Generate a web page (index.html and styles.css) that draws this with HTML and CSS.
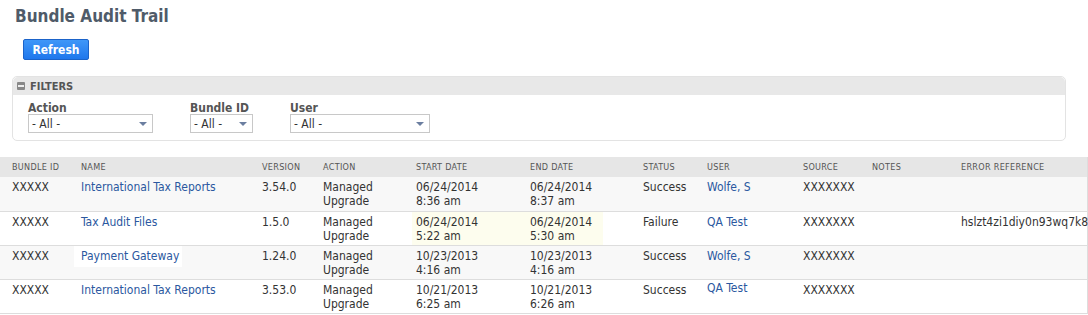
FILE: index.html
```html
<!DOCTYPE html>
<html lang="en">
<head>
  <meta charset="UTF-8" />
  <title>Bundle Audit Trail</title>
  <link rel="stylesheet" href="styles.css">
</head>
<body>

  <h1 class="page-title">Bundle Audit Trail</h1>

  <div class="toolbar">
    <button class="btn-refresh">Refresh</button>
  </div>

  <div class="filters">
    <div class="filters-head">
      <span class="collapse-icon"></span>
      FILTERS
    </div>
    <div class="filters-body">
      <div class="filter">
        <label>Action</label>
        <div class="select w-action">- All - <span class="caret"></span></div>
      </div>
      <div class="filter">
        <label>Bundle ID</label>
        <div class="select w-bundle">- All - <span class="caret"></span></div>
      </div>
      <div class="filter">
        <label>User</label>
        <div class="select w-user">- All - <span class="caret"></span></div>
      </div>
    </div>
  </div>

  <table class="audit">
    <colgroup>
      <col style="width:74px">
      <col style="width:181px">
      <col style="width:61px">
      <col style="width:93px">
      <col style="width:114px">
      <col style="width:113px">
      <col style="width:64px">
      <col style="width:96px">
      <col style="width:69px">
      <col style="width:89px">
      <col>
    </colgroup>
    <thead>
      <tr>
        <th>Bundle ID</th>
        <th>Name</th>
        <th>Version</th>
        <th>Action</th>
        <th>Start Date</th>
        <th>End Date</th>
        <th>Status</th>
        <th>User</th>
        <th>Source</th>
        <th>Notes</th>
        <th>Error Reference</th>
      </tr>
    </thead>
    <tbody>
      <tr class="odd">
        <td>XXXXX</td>
        <td><a href="#">International Tax Reports</a></td>
        <td>3.54.0</td>
        <td>Managed<br>Upgrade</td>
        <td>06/24/2014<br>8:36 am</td>
        <td>06/24/2014<br>8:37 am</td>
        <td>Success</td>
        <td><a href="#">Wolfe, S</a></td>
        <td>XXXXXXX</td>
        <td></td>
        <td></td>
      </tr>
      <tr>
        <td>XXXXX</td>
        <td><a href="#">Tax Audit Files</a></td>
        <td>1.5.0</td>
        <td>Managed<br>Upgrade</td>
        <td class="hl-start">06/24/2014<br>5:22 am</td>
        <td class="hl-end">06/24/2014<br>5:30 am</td>
        <td>Failure</td>
        <td><a href="#">QA Test</a></td>
        <td>XXXXXXX</td>
        <td></td>
        <td class="ref">hslzt4zi1diy0n93wq7k8</td>
      </tr>
      <tr class="odd">
        <td>XXXXX</td>
        <td><a href="#" class="focus">Payment Gateway</a></td>
        <td>1.24.0</td>
        <td>Managed<br>Upgrade</td>
        <td>10/23/2013<br>4:16 am</td>
        <td>10/23/2013<br>4:16 am</td>
        <td>Success</td>
        <td><a href="#">Wolfe, S</a></td>
        <td>XXXXXXX</td>
        <td></td>
        <td></td>
      </tr>
      <tr>
        <td>XXXXX</td>
        <td><a href="#">International Tax Reports</a></td>
        <td>3.53.0</td>
        <td>Managed<br>Upgrade</td>
        <td>10/21/2013<br>6:25 am</td>
        <td>10/21/2013<br>6:26 am</td>
        <td>Success</td>
        <td><a href="#" class="raised">QA Test</a></td>
        <td>XXXXXXX</td>
        <td></td>
        <td></td>
      </tr>
    </tbody>
  </table>

</body>
</html>
```

FILE: styles.css
```css
* {
  margin: 0;
  padding: 0;
  box-sizing: border-box;
}

body {
  font-family: "DejaVu Sans Condensed", "DejaVu Sans", sans-serif;
  font-size: 12px;
  color: #333;
  background: #fff;
  margin: 0;
  width: 1088px;
  overflow: hidden;
}

.page-title {
  font-size: 17px;
  font-weight: bold;
  color: #4f5b69;
  padding: 6px 0 0 15px;
  height: 39px;
}

.toolbar {
  padding-left: 23px;
  height: 37px;
}

.btn-refresh {
  font-family: inherit;
  font-size: 12px;
  font-weight: bold;
  color: #fff;
  width: 66px;
  height: 21px;
  border: 1px solid #1b63c9;
  border-radius: 2px;
  background: linear-gradient(#3f97f8, #1f77ec);
  cursor: pointer;
}

.filters {
  margin: 0 22px 16px 12px;
  border: 1px solid #e3e3e3;
  border-radius: 5px;
  height: 65px;
}

.filters-head {
  display: flex;
  align-items: center;
  gap: 5px;
  height: 18px;
  padding-left: 4px;
  background: #e8e8e8;
  border-radius: 5px 5px 0 0;
  font-size: 11px;
  font-weight: bold;
  color: #555;
}

.collapse-icon {
  width: 8px;
  height: 8px;
  background: #888;
  border-radius: 1px;
  position: relative;
}

.collapse-icon::after {
  content: "";
  position: absolute;
  left: 1px;
  top: 3px;
  width: 6px;
  height: 2px;
  background: #eee;
}

.filters-body {
  display: flex;
  gap: 37px;
  padding: 7px 0 0 15px;
}

.filter label {
  display: block;
  font-weight: bold;
  color: #555;
  line-height: 12px;
}

.select {
  display: flex;
  align-items: center;
  justify-content: space-between;
  height: 19px;
  padding: 0 5px 0 3px;
  border: 1px solid #c8c8c8;
  background: #fff;
  color: #333;
}

.caret {
  width: 0;
  height: 0;
  border-left: 4px solid transparent;
  border-right: 4px solid transparent;
  border-top: 4px solid #6b7ea0;
}

.w-action { width: 125px; }
.w-bundle { width: 63px; }
.w-user { width: 140px; }

.audit {
  width: 1088px;
  border-collapse: collapse;
  table-layout: fixed;
  border-right: 1px solid #ddd;
}

.audit th {
  text-align: left;
  font-size: 9px;
  font-weight: normal;
  text-transform: uppercase;
  letter-spacing: 0.3px;
  color: #555;
  background: #e6e6e6;
  height: 20px;
  padding: 0 7px;
  white-space: nowrap;
}

.audit td {
  vertical-align: top;
  padding: 3px 7px 0 7px;
  height: 34px;
  line-height: 14px;
  border-bottom: 1px solid #ddd;
  white-space: nowrap;
}

.audit th:first-child,
.audit td:first-child {
  padding-left: 12px;
}

.audit tr.odd td {
  background: #f8f8f8;
}

.audit td.hl-start {
  background: linear-gradient(to right, transparent 3px, #fdfdee 3px);
}

.audit td.hl-end {
  background: linear-gradient(to right, #fdfdee 80px, transparent 80px);
}

.audit td.ref {
  overflow: visible;
}

.audit a {
  color: #2b58a0;
  text-decoration: none;
}

.audit a.focus {
  background: #fff;
  margin-left: -7px;
  padding: 3px 3px 4px 7px;
}

.audit a.raised {
  position: relative;
  top: -2px;
}
```
